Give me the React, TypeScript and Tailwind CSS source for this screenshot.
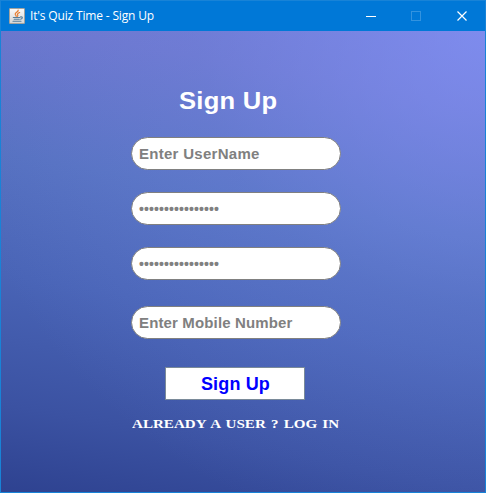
import React from "react";

function JavaIcon() {
  return (
    <svg width="16" height="16" viewBox="0 0 16 16" className="shrink-0">
      <defs>
        <linearGradient id="tile" x1="0" y1="0" x2="0" y2="1">
          <stop offset="0" stopColor="#fafafa" />
          <stop offset="1" stopColor="#d5d5d5" />
        </linearGradient>
      </defs>
      <rect x="0.5" y="0.5" width="15" height="15" rx="0.5" fill="url(#tile)" stroke="#a3a39f" />
      <g fill="none" strokeLinecap="round">
        <path d="M9.2 2C9.6 3.9 5.9 4.5 6.2 6.2C6.4 7.1 7.4 7.4 7.2 8.4" stroke="#e67b2d" strokeWidth="1.2" />
        <path d="M10.7 4.6C8.9 5.2 8 6 8.7 6.8C9.2 7.5 8.8 8 8.3 8.4" stroke="#e67b2d" strokeWidth="1.1" />
        <path d="M4.3 9.5H10.8M5.2 11.3H10.3M11.6 8.9C14.1 8.5 13.7 10.6 11.6 11.2M4 13.3H12" stroke="#557e9c" strokeWidth="1.1" />
      </g>
    </svg>
  );
}

function Field({ children, className = "" }: { children: React.ReactNode; className?: string }) {
  return (
    <div className={`flex h-[33px] w-[210px] items-center rounded-[17px] border border-[#808080] bg-white pl-[7px] text-[#808080] ${className}`}>
      {children}
    </div>
  );
}

function Dots() {
  return <span className="text-[14px] leading-none font-bold tracking-[0.1px]">••••••••••••••••</span>;
}

export default function App() {
  return (
    <div className="flex h-[493px] w-[486px] flex-col overflow-hidden border border-[#1883d7] font-['Liberation_Sans',sans-serif]">
      <header className="flex h-[30px] shrink-0 items-center bg-[#0078d7] pl-2 text-white">
        <JavaIcon />
        <span className="ml-[5px] font-['Open_Sans',sans-serif] text-[12px] leading-4 tracking-[-0.16px] whitespace-nowrap">It's Quiz Time - Sign Up</span>
        <svg width="102" height="12" viewBox="0 0 102 12" className="mr-[17px] ml-auto" fill="none">
          <path d="M0 6.5H10" stroke="#fff" />
          <rect x="45.5" y="1.5" width="9" height="9" stroke="#3393df" />
          <path d="M91.5 1.5L100.5 10.5M100.5 1.5L91.5 10.5" stroke="#fff" strokeWidth="1.2" />
        </svg>
      </header>
      <main className="flex flex-1 flex-col items-start bg-[radial-gradient(ellipse_at_100%_0%,rgba(134,150,252,0.65)_0%,rgba(120,145,238,0.24)_42%,transparent_80%),linear-gradient(190deg,#7078d2_0%,#6b75cc_14%,#5671c0_38%,#4964b6_60%,#3b52a2_84%,#2e4290_100%)]">
        <h1 className="mt-[56px] ml-[178px] origin-left scale-x-[1.065] text-[24px] leading-[28px] font-bold tracking-[0.25px] whitespace-nowrap text-white">Sign Up</h1>
        <Field className="mt-[22px] ml-[130px]"><span className="text-[15px] leading-5 font-bold tracking-[0.28px]">Enter UserName</span></Field>
        <Field className="mt-[22px] ml-[130px]"><Dots /></Field>
        <Field className="mt-[22px] ml-[130px]"><Dots /></Field>
        <Field className="mt-[26px] ml-[130px]"><span className="text-[15px] leading-5 font-bold tracking-[0.14px]">Enter Mobile Number</span></Field>
        <button className="mt-[28px] ml-[164px] flex h-[33px] w-[140px] items-center justify-center border border-[#7a8a99] bg-white pl-px text-[18px] leading-5 font-bold tracking-[0.15px] text-[#0000ff]">Sign Up</button>
        <p className="mt-[16px] ml-[131px] origin-left scale-x-[1.16] font-['Liberation_Serif',serif] text-[13px] leading-4 font-bold [word-spacing:1.2px] whitespace-nowrap text-white">ALREADY A USER ? LOG IN</p>
      </main>
    </div>
  );
}
